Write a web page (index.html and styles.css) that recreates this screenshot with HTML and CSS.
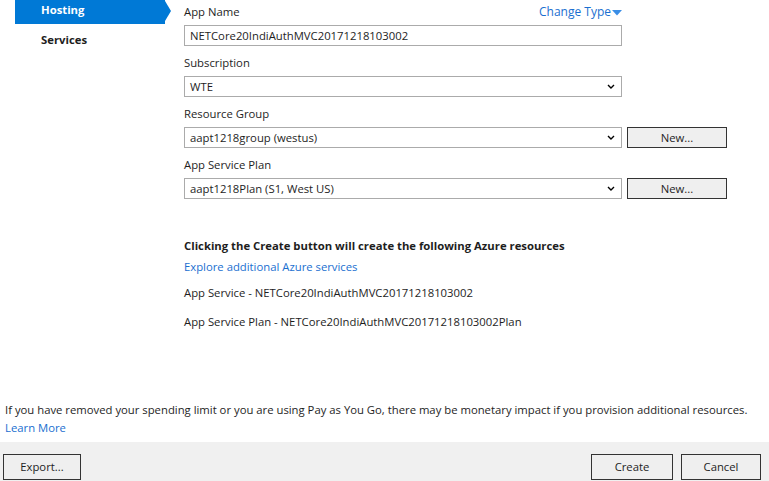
FILE: index.html
```html
<!DOCTYPE html>
<html>
<head>
<meta charset="utf-8">
<link rel="stylesheet" href="styles.css">
</head>
<body>
<div class="page">
  <div class="main">
    <nav class="nav">
      <div class="nav-item active">Hosting</div>
      <div class="nav-item">Services</div>
    </nav>
    <div class="content">
      <div class="field">
        <div class="label-row">
          <span class="label">App Name</span>
          <span class="change-type">Change Type<svg class="tri" width="10" height="6" viewBox="0 0 10 6"><path d="M0 0 H10 L5 5.5 Z" fill="#3a8ee6"/></svg></span>
        </div>
        <div class="box">NETCore20IndiAuthMVC20171218103002</div>
      </div>
      <div class="field">
        <div class="label">Subscription</div>
        <div class="box select">WTE<svg class="chev" width="8" height="5" viewBox="0 0 8 5"><path d="M1 1 L4 4 L7 1" fill="none" stroke="#000" stroke-width="1.4"/></svg></div>
      </div>
      <div class="field">
        <div class="label">Resource Group</div>
        <div class="row">
          <div class="box select">aapt1218group (westus)<svg class="chev" width="8" height="5" viewBox="0 0 8 5"><path d="M1 1 L4 4 L7 1" fill="none" stroke="#000" stroke-width="1.4"/></svg></div>
          <div class="btn new">New...</div>
        </div>
      </div>
      <div class="field">
        <div class="label">App Service Plan</div>
        <div class="row">
          <div class="box select">aapt1218Plan (S1, West US)<svg class="chev" width="8" height="5" viewBox="0 0 8 5"><path d="M1 1 L4 4 L7 1" fill="none" stroke="#000" stroke-width="1.4"/></svg></div>
          <div class="btn new">New...</div>
        </div>
      </div>
      <div class="summary">
        <div class="bold">Clicking the Create button will create the following Azure resources</div>
        <div class="link explore">Explore additional Azure services</div>
        <div class="res res1">App Service - NETCore20IndiAuthMVC20171218103002</div>
        <div class="res res2">App Service Plan - NETCore20IndiAuthMVC20171218103002Plan</div>
      </div>
    </div>
  </div>
  <div class="note">
    <div>If you have removed your spending limit or you are using Pay as You Go, there may be monetary impact if you provision additional resources.</div>
    <div class="link">Learn More</div>
  </div>
  <div class="footer">
    <div class="btn export">Export...</div>
    <div class="right">
      <div class="btn create">Create</div>
      <div class="btn cancel">Cancel</div>
    </div>
  </div>
</div>
</body>
</html>
```

FILE: styles.css
```css
html, body {
  margin: 0;
  padding: 0;
  background: #ffffff;
}
body {
  font-family: "Segoe UI", "Open Sans", "Noto Sans", sans-serif;
  font-size: 11.3px;
  color: #1e1e1e;
}
.page {
  width: 769px;
  height: 481px;
  display: flex;
  flex-direction: column;
  overflow: hidden;
}
.main {
  flex: 1;
  display: flex;
}
.nav {
  width: 155px;
  padding-left: 15px;
  flex-shrink: 0;
}
.nav-item {
  height: 25px;
  line-height: 20px;
  padding-left: 26px;
  font-weight: bold;
  color: #1e1e1e;
  position: relative;
}
.nav-item.active {
  background: #0079d6;
  color: #ffffff;
  width: 124px;
  height: 24px;
}
.nav-item.active::after {
  content: "";
  position: absolute;
  right: -6px;
  top: 1px;
  border-left: 6px solid #0079d6;
  border-top: 10px solid transparent;
  border-bottom: 10px solid transparent;
}
.nav-item + .nav-item {
  margin-top: 6px;
}
.content {
  padding-left: 14px;
  padding-top: 3px;
  width: 543px;
}
.field {
  margin-bottom: 8px;
}
.label-row {
  display: flex;
  justify-content: space-between;
  width: 438px;
}
.label {
  display: block;
  height: 18px;
  line-height: 18px;
  margin-bottom: 4px;
}
.change-type {
  color: #1a6fd0;
  line-height: 18px;
  height: 18px;
  display: flex;
  align-items: center;
  font-size: 12px;
}
.tri {
  margin-left: 1px;
  margin-top: 2px;
}
.box {
  box-sizing: border-box;
  width: 438px;
  height: 21px;
  border: 1px solid #ababab;
  padding-left: 5px;
  line-height: 19px;
  background: #fff;
}
.select {
  display: flex;
  align-items: center;
  justify-content: space-between;
  padding-right: 6px;
}
.row {
  display: flex;
  gap: 5px;
}
.btn {
  box-sizing: border-box;
  border: 1px solid #333333;
  background: #efefef;
  text-align: center;
}
.new {
  width: 100px;
  height: 21px;
  line-height: 19px;
}
.summary {
  margin-top: 38px;
}
.bold {
  font-weight: bold;
  line-height: 18px;
}
.link {
  color: #1a6fd0;
  line-height: 18px;
}
.explore {
  margin-top: 3px;
}
.res {
  line-height: 18px;
}
.res1 {
  margin-top: 8px;
}
.res2 {
  margin-top: 11px;
}
.note {
  padding-left: 5px;
  line-height: 18px;
  margin-bottom: 5px;
}
.footer {
  background: #f0f0f0;
  height: 39px;
  box-sizing: border-box;
  padding: 12px 8px 0 3px;
  display: flex;
  justify-content: space-between;
}
.footer .btn {
  height: 26px;
  line-height: 24px;
}
.export {
  width: 78px;
}
.right {
  display: flex;
  gap: 8px;
}
.create {
  width: 82px;
}
.cancel {
  width: 80px;
}
```
